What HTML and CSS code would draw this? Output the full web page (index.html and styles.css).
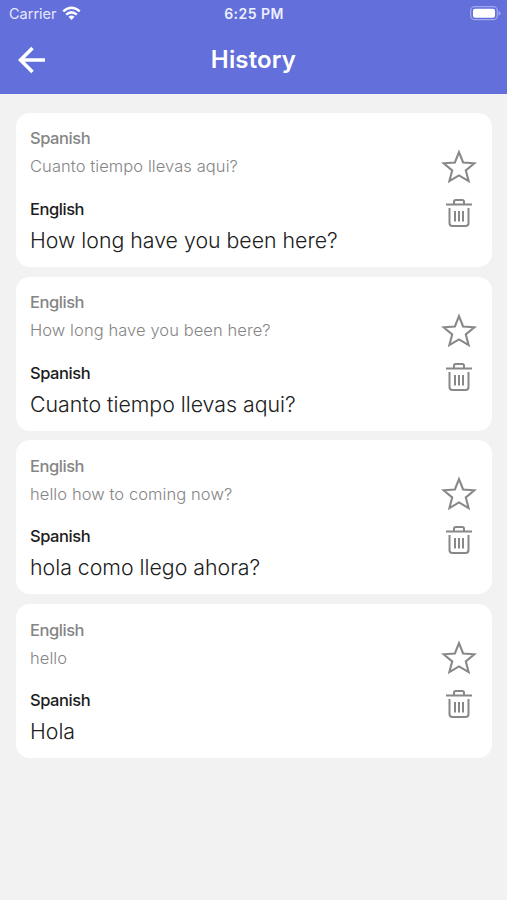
FILE: index.html
```
<!DOCTYPE html>
<html lang="en">
<head>
<meta charset="utf-8">
<title>History</title>
<link rel="stylesheet" href="styles.css">
</head>
<body>
<svg class="symbols" aria-hidden="true">
  <symbol id="star" viewBox="0 0 36 36"><path d="M18 3.2 22.1 13.5 33.4 14.3 24.8 21.5 27.6 32.1 18 26.4 8.4 32.1 11.2 21.5 2.6 14.3 13.9 13.5Z" fill="none" stroke="currentColor" stroke-width="2.1"/></symbol>
  <symbol id="trash" viewBox="0 0 28 30"><g fill="none" stroke="currentColor" stroke-width="2"><path d="M1 6.500H27M9 6V3.800Q9 2 10.800 2H17.200Q19 2 19 3.800V6M4.500 10V25Q4.500 28 7.500 28H20.500Q23.500 28 23.500 25V10"/><path d="M10 13V23.500M14 13V23.500M18 13V23.500"/></g></symbol>
</svg>
<header class="header">
  <div class="status">
    <div class="carrier"><span>Carrier</span>
      <svg class="wifi" viewBox="0 0 20 15"><g fill="none" stroke="#fff" stroke-width="2.600"><path d="M1.300 5.300Q10-2.300 18.700 5.300"/><path d="M4.400 8.700Q10 3.900 15.600 8.700"/></g><path d="M6.800 11Q10 8.300 13.200 11L10 14.300Z" fill="#fff"/></svg>
    </div>
    <span class="time">6:25 PM</span>
    <svg class="battery" viewBox="0 0 31 15"><rect x=".7" y=".7" width="26.600" height="13" rx="4" fill="none" stroke="#a0a7ec" stroke-width="1.300"/><rect x="3" y="2.800" width="22" height="9" rx="2" fill="#fff"/><path d="M28.500 4.800Q33 7.200 28.500 9.600Z" fill="#a0a7ec"/></svg>
  </div>
  <div class="navbar">
    <svg class="back" viewBox="0 0 28 28"><path d="M27 14H3M14.500 2 2.500 14 14.500 26" fill="none" stroke="#fff" stroke-width="3.600"/></svg>
    <h1 class="title">History</h1>
  </div>
</header>
<main class="list">
  <article class="card">
    <div class="texts"><div class="label">Spanish</div><div class="source">Cuanto tiempo llevas aqui?</div><div class="label target">English</div><div class="result">How long have you been here?</div></div>
    <div class="actions"><svg class="star"><use href="#star"/></svg><svg class="trash"><use href="#trash"/></svg></div>
  </article>
  <article class="card">
    <div class="texts"><div class="label">English</div><div class="source">How long have you been here?</div><div class="label target">Spanish</div><div class="result">Cuanto tiempo llevas aqui?</div></div>
    <div class="actions"><svg class="star"><use href="#star"/></svg><svg class="trash"><use href="#trash"/></svg></div>
  </article>
  <article class="card">
    <div class="texts"><div class="label">English</div><div class="source">hello how to coming now?</div><div class="label target">Spanish</div><div class="result">hola como llego ahora?</div></div>
    <div class="actions"><svg class="star"><use href="#star"/></svg><svg class="trash"><use href="#trash"/></svg></div>
  </article>
  <article class="card">
    <div class="texts"><div class="label">English</div><div class="source">hello</div><div class="label target">Spanish</div><div class="result">Hola</div></div>
    <div class="actions"><svg class="star"><use href="#star"/></svg><svg class="trash"><use href="#trash"/></svg></div>
  </article>
</main>
</body>
</html>
```
FILE: styles.css
```
* { box-sizing: border-box; }
body { margin: 0; min-height: 900px; background: #f2f2f2; font-family: Inter, "Liberation Sans", sans-serif; }
.symbols { display: none; }
svg { display: block; }
.header { height: 93.600px; background: #636fda; color: #fff; }
.status { display: grid; grid-template-columns: 1fr auto 1fr; align-items: center; height: 28px; padding: 0 8px 0 9px; }
.carrier { display: flex; align-items: center; gap: 5px; font-size: 14.500px; line-height: 28px; color: #e6e9ff; }
.wifi { width: 19px; height: 15px; margin-top: -2px; }
.time { font-size: 14px; font-weight: 600; line-height: 28px; letter-spacing: .45px; color: #eef0ff; }
.battery { width: 31px; height: 15px; justify-self: end; margin-right: -2px; margin-top: -1px; }
.navbar { display: grid; grid-template-columns: 28px 1fr 28px; align-items: center; height: 64px; padding: 0 18px; }
.back { width: 28px; height: 28px; }
.title { margin: 0; text-align: center; font-size: 24px; line-height: 32px; font-weight: 600; letter-spacing: .15px; }
.list { display: flex; flex-direction: column; gap: 9.700px; padding: 19.400px 15px 0 16px; }
.card { display: flex; justify-content: space-between; height: 154px; padding: 13.500px 15px 0 14px; border-radius: 14px; background: #fff; }
.texts { white-space: nowrap; }
.label { height: 24px; line-height: 24px; font-size: 16.500px; font-weight: 500; letter-spacing: -.45px; color: #858585; }
.source { height: 24px; margin-top: 4px; line-height: 24px; font-size: 16.500px; font-weight: 300; letter-spacing: .08px; color: #858585; }
.target { margin-top: 18.500px; color: #1c1c1c; }
.result { height: 30px; margin-top: 4px; line-height: 30px; font-size: 21.300px; font-weight: 300; color: #202020; }
.actions { display: flex; flex-direction: column; align-items: center; width: 36px; padding-top: 22.500px; gap: 13px; color: #888; }
.star { width: 36px; height: 36px; }
.trash { width: 28px; height: 30px; }
```
